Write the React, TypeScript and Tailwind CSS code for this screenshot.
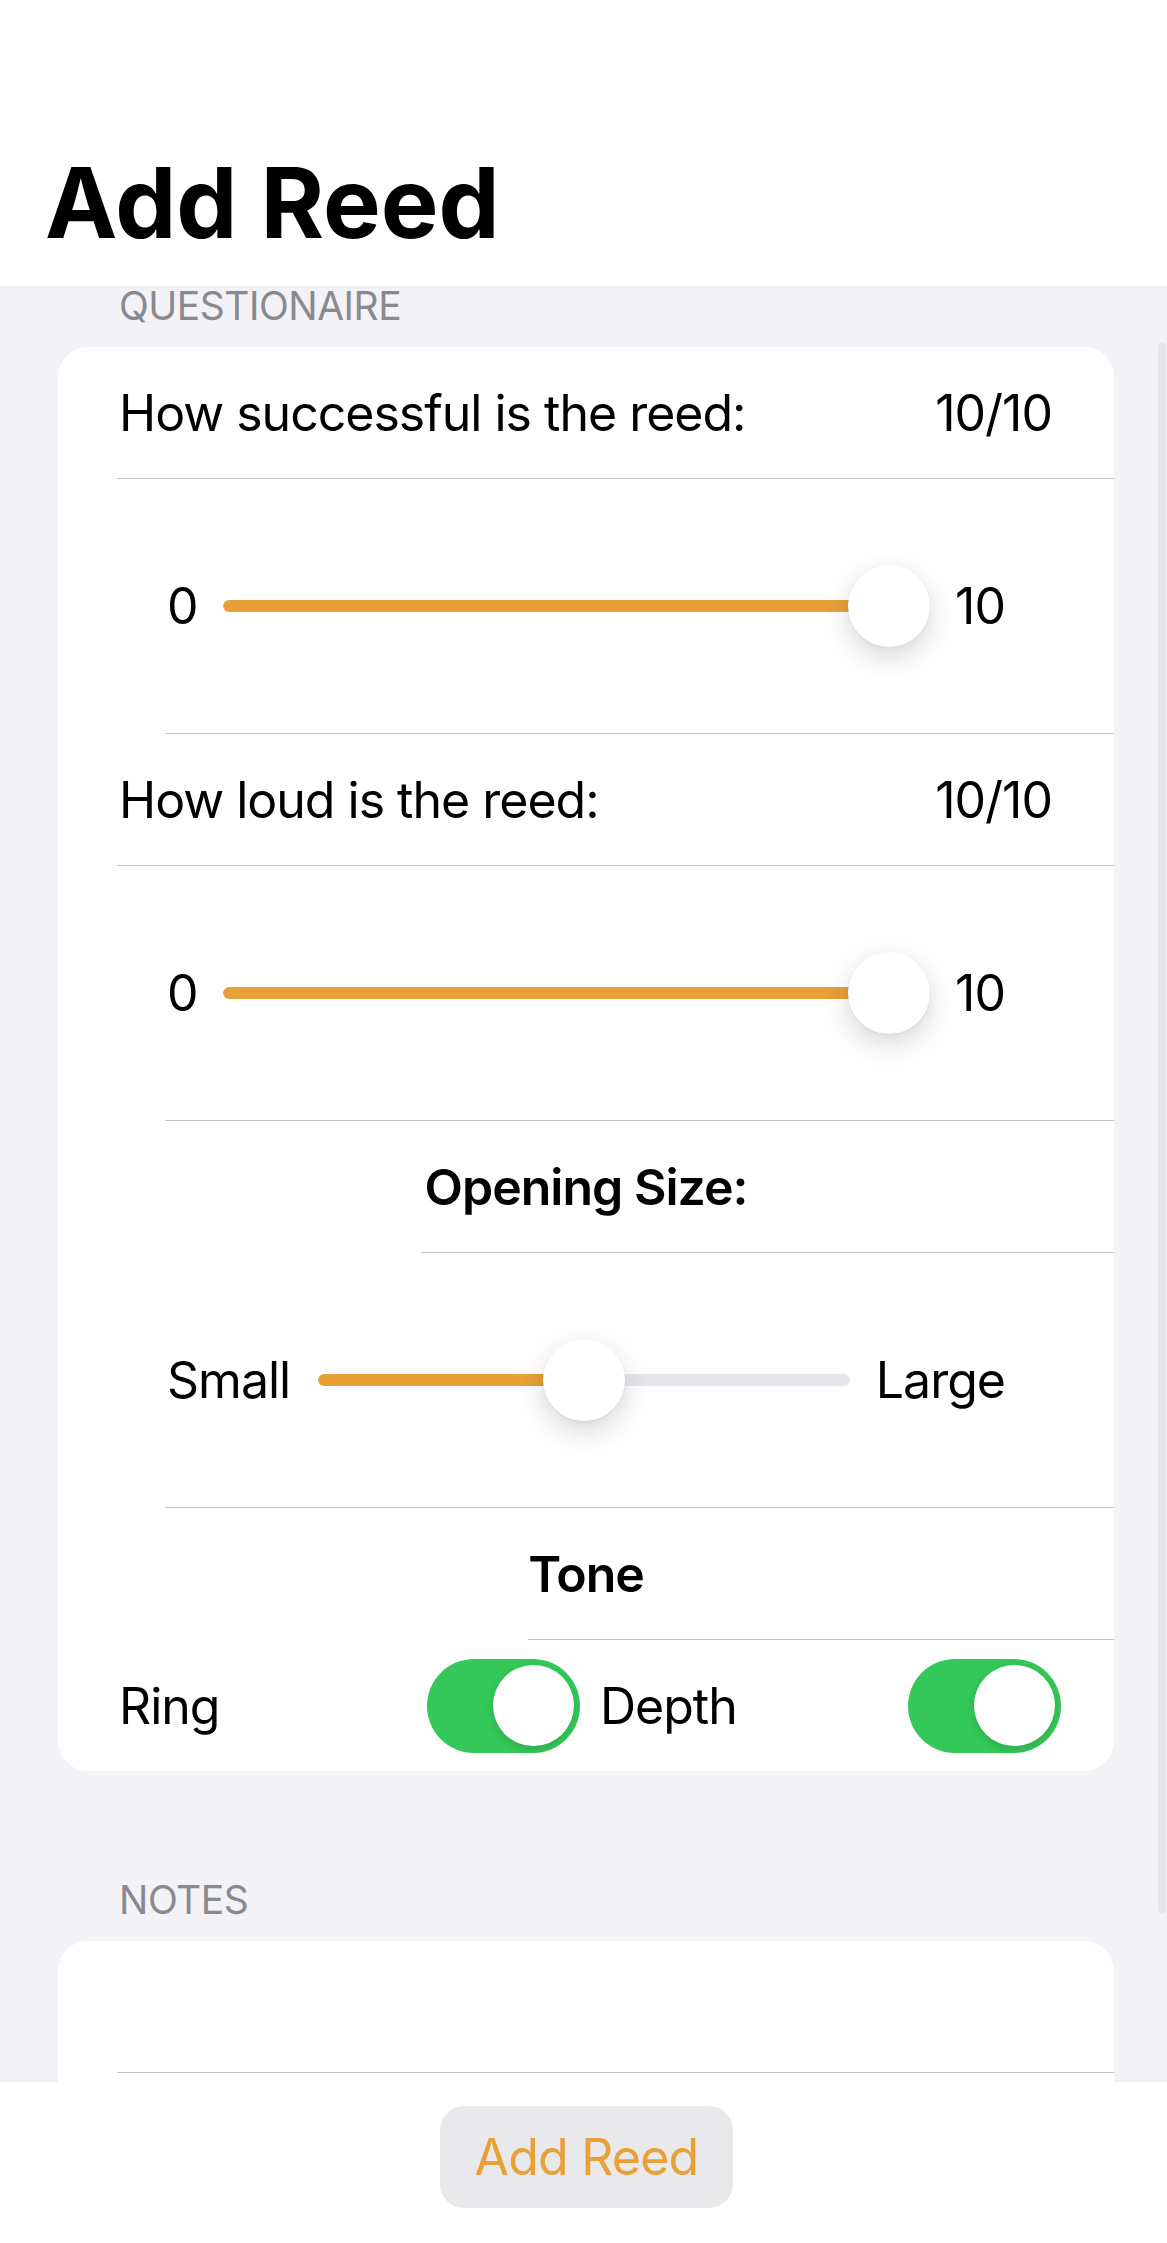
import { useState } from 'react'

const ORANGE = '#e8a037'

function Separator({ inset }: { inset: string }) {
  return <div className={`h-px bg-[#c6c6c8] ${inset}`} />
}

function Slider({
  min,
  max,
  value,
  minWidth,
  maxWidth,
}: {
  min: string
  max: string
  value: number
  minWidth: string
  maxWidth: string
}) {
  return (
    <div className="h-[254px] flex items-center pl-[109px] pr-[109px]">
      <span className={`leading-none shrink-0 ${minWidth}`}>{min}</span>
      <div className="relative flex-1 h-[82px] flex items-center">
        <div className="w-full h-[12px] rounded-full bg-[#e5e5ea] overflow-hidden">
          <div className="h-full rounded-full" style={{ width: `${value * 100}%`, background: ORANGE }} />
        </div>
        <div
          className="absolute top-0 h-[82px] w-[82px] rounded-full bg-white shadow-[0_10px_28px_rgba(0,0,0,0.16),0_1px_3px_rgba(0,0,0,0.06)]"
          style={{ left: `calc(${value} * (100% - 82px))` }}
        />
      </div>
      <span className={`leading-none shrink-0 text-right ${maxWidth}`}>{max}</span>
    </div>
  )
}

function Toggle({ on, onClick }: { on: boolean; onClick: () => void }) {
  return (
    <div
      onClick={onClick}
      className={`w-[153px] h-[94px] rounded-full flex items-center px-[6px] cursor-pointer ${
        on ? 'bg-[#34c759] justify-end' : 'bg-[#e9e9eb] justify-start'
      }`}
    >
      <div className="w-[81px] h-[81px] rounded-full bg-white shadow-[0_4px_10px_rgba(0,0,0,0.12)]" />
    </div>
  )
}

export default function App() {
  const [ring, setRing] = useState(true)
  const [depth, setDepth] = useState(true)

  return (
    <div className="relative w-full h-[2243px] overflow-hidden flex flex-col bg-[#f2f2f7] text-black font-['Inter','Noto_Sans',sans-serif]">
      {/* nav header */}
      <div className="h-[286px] bg-white pl-[45px] pt-[154px] shrink-0">
        <h1 className="text-[97px] font-bold leading-none">Add Reed</h1>
      </div>

      <div className="flex-1 flex flex-col pl-[58px] pr-[53px] text-[50px] tracking-[-1px]">
        <div className="h-[61px] pl-[61px]">
          <p className="text-[39px] leading-none text-[#8a8a8e] tracking-[-0.5px]">QUESTIONAIRE</p>
        </div>

        <div className="bg-white rounded-[30px] flex flex-col overflow-hidden">
          <div className="h-[131px] flex items-center justify-between pl-[61px] pr-[62px]">
            <span className="leading-none">How successful is the reed:</span>
            <span className="leading-none">10/10</span>
          </div>
          <Separator inset="ml-[59px]" />
          <Slider min="0" max="10" value={1} minWidth="w-[56px]" maxWidth="w-[75px]" />
          <Separator inset="ml-[107px]" />

          <div className="h-[131px] flex items-center justify-between pl-[61px] pr-[62px]">
            <span className="leading-none">How loud is the reed:</span>
            <span className="leading-none">10/10</span>
          </div>
          <Separator inset="ml-[59px]" />
          <Slider min="0" max="10" value={1} minWidth="w-[56px]" maxWidth="w-[75px]" />
          <Separator inset="ml-[107px]" />

          <div className="h-[131px] flex items-center justify-center">
            <span className="leading-none font-semibold">Opening Size:</span>
          </div>
          <Separator inset="ml-[363px]" />
          <Slider min="Small" max="Large" value={0.5} minWidth="w-[151px]" maxWidth="w-[155px]" />
          <Separator inset="ml-[107px]" />

          <div className="h-[131px] flex items-center justify-center">
            <span className="leading-none font-semibold">Tone</span>
          </div>
          <Separator inset="ml-[470px]" />

          <div className="h-[131px] flex items-center gap-[20px] pl-[61px] pr-[53px]">
            <div className="flex-1 flex items-center justify-between">
              <span className="leading-none">Ring</span>
              <Toggle on={ring} onClick={() => setRing(!ring)} />
            </div>
            <div className="flex-1 flex items-center justify-between">
              <span className="leading-none">Depth</span>
              <Toggle on={depth} onClick={() => setDepth(!depth)} />
            </div>
          </div>
        </div>

        <div className="h-[170px] flex items-end pl-[61px] pb-[22px]">
          <p className="text-[39px] leading-none text-[#8a8a8e] tracking-[-0.5px]">NOTES</p>
        </div>

        <div className="flex-1 bg-white rounded-t-[30px] flex flex-col">
          <div className="h-[131px]" />
          <Separator inset="ml-[59px]" />
        </div>
      </div>

      {/* bottom bar */}
      <div className="h-[161px] bg-white shrink-0 flex justify-center pt-[24px] pl-[6px]">
        <button className="h-[102px] w-[293px] rounded-[24px] bg-[#e9e9eb] text-[50px] tracking-[-0.8px] leading-none" style={{ color: ORANGE }}>
          Add Reed
        </button>
      </div>

      {/* scroll indicator */}
      <div className="absolute right-[1px] top-[343px] h-[1570px] w-[8px] rounded-full bg-[#e4e4e9]" />
    </div>
  )
}
